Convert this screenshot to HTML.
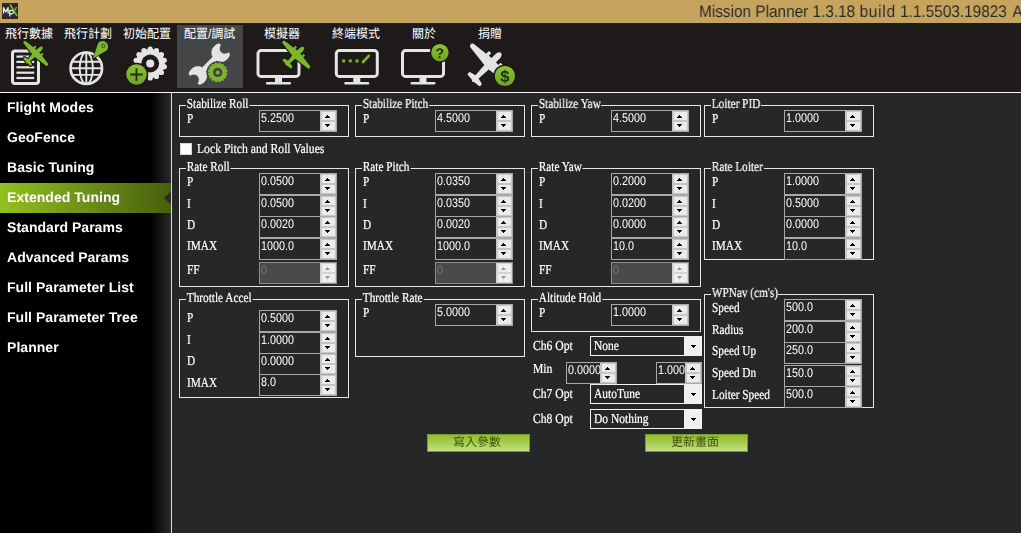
<!DOCTYPE html><html><head><meta charset="utf-8"><title>Mission Planner</title><style>
*{box-sizing:border-box;margin:0;padding:0}
html,body{width:1021px;height:533px;overflow:hidden;background:#262729}
body{position:relative;font-family:"Liberation Serif",serif;font-size:14px;color:#fff;text-rendering:geometricPrecision}
svg text{text-rendering:geometricPrecision}
.abs,.abs>*{position:absolute}
#title{left:0;top:0;width:1021px;height:23px;background:#c6a45d}
#title .t{will-change:transform;left:698.5px;top:2px;font:16.8px/20px "Liberation Sans",sans-serif;color:#2b2a27;white-space:nowrap;transform:scaleX(.915);transform-origin:0 0}
#tb{left:0;top:23px;width:1021px;height:69px;background:#1c1918;background-image:repeating-linear-gradient(0deg,rgba(255,255,255,.012) 0,rgba(255,255,255,.012) 1px,rgba(0,0,0,0) 1px,rgba(0,0,0,0) 2px)}
#hl{left:0;top:92px;width:1021px;height:1px;background:#f6f6f6}
#side{left:0;top:93px;width:171px;height:440px;background:linear-gradient(90deg,#000 0,#000 150px,#0b0b0b 156px,#2a2a2a 171px)}
#vl{left:171px;top:93px;width:1px;height:440px;background:#d8d8d8}
.mi{will-change:transform;left:0;width:171px;height:30px;font:bold 14px/28px "Liberation Sans",sans-serif;color:#fff;padding-left:7px;white-space:nowrap;letter-spacing:.04px}
.mi.sel{background:linear-gradient(90deg,#93c01f 0,#5d7c14 120px,#47600f 171px)}
.gb{border:1px solid #e6e6e6}
.gt,.lb,.cb .v{-webkit-text-stroke:.22px #fff}
.gt,.lb{white-space:nowrap;font:13.7px/16px "Liberation Serif",serif;text-rendering:geometricPrecision;height:16px;transform:scaleX(.823);transform-origin:0 0}
.gt{background:#262729;padding:0 1px}
.sp{border:1px solid #a8a9ab;background:#262729;height:22px;overflow:hidden}
.sp .v{left:.5px;top:0;font:12.6px/14px "Liberation Sans",sans-serif;color:#fff;transform:scaleX(.853);transform-origin:0 0;white-space:nowrap}
.sp .bt{right:0;top:0;width:16px;height:20px;background:#c6c6c6}
.sp .u,.sp .d{left:2px;width:13px;height:8px;background:#ebebeb}
.sp .u{top:1px}
.sp .d{top:11px}
.sp.dis{background:#48494b;border-color:#8e8e90}
.sp.dis .v{color:#77787a}
.sp.dis .bt{background:#d4d4d4}
.sp.dis .u,.sp.dis .d{background:#eee}
.au,.ad{width:1px;height:1px;background:currentColor;color:#000}
.au{box-shadow:-1px 1px,0 1px,1px 1px,-2px 2px,-1px 2px,0 2px,1px 2px,2px 2px}
.ad{box-shadow:-1px -1px,0 -1px,1px -1px,-2px -2px,-1px -2px,0 -2px,1px -2px,2px -2px}
.cb{border:1px solid #f2f2f2;background:#262729;height:20px}
.cb .v{left:3px;top:1px;font:13.7px/16px "Liberation Serif",serif;text-rendering:geometricPrecision;transform:scaleX(.84);transform-origin:0 0;white-space:nowrap}
.cb .bt{right:0;top:0;width:17px;height:18px;background:#f0f0f0}
.btn{height:18px;border:1px solid #79992a;background:linear-gradient(180deg,#92bf2b 0,#a5cb4c 45%,#c4df86 100%)}
</style></head><body class="abs">
<div id="title" class="abs"><svg style="left:2px;top:3px" width="16" height="16" viewBox="0 0 16 16"><rect width="16" height="16" fill="#2b2b2c"/><g fill="none" stroke="#f2f2f2" stroke-width="1.25" stroke-linejoin="round"><path d="M1.5 10.4V4.6L3.8 9L6.1 4.6V10.4"/><path d="M7.8 13.6V7.3H9.7a1.8 1.8 0 0 1 0 3.6H7.8"/></g><path d="M8.3 2L14.7 12.4" stroke="#7cb82f" stroke-width="1.7" fill="none" stroke-linecap="round"/><path d="M14.3 4.6L12.4 7.6" stroke="#7cb82f" stroke-width="1.2" fill="none" stroke-linecap="round"/></svg><div class="t">Mission Planner 1.3.18 <span style="letter-spacing:.85px">build</span> 1.1.5503.19823<span style="letter-spacing:1.4px"> </span>A</div></div>
<div id="tb" class="abs">
<div style="left:177px;top:2px;width:66px;height:63px;background:#444547"></div>
<svg style="left:5px;top:3px;overflow:visible" width="48" height="16" aria-label="飛行數據"><title>飛行數據</title><text x="0" y="0" font-size="12" fill="#fff" font-family="&quot;Liberation Sans&quot;, &quot;Noto Sans CJK TC&quot;, sans-serif" transform="translate(0,12.45) scale(1,1.06)">飛行數據</text></svg>
<svg style="left:63.5px;top:3px;overflow:visible" width="48" height="16" aria-label="飛行計劃"><title>飛行計劃</title><text x="0" y="0" font-size="12" fill="#fff" font-family="&quot;Liberation Sans&quot;, &quot;Noto Sans CJK TC&quot;, sans-serif" transform="translate(0,12.45) scale(1,1.06)">飛行計劃</text></svg>
<svg style="left:122.5px;top:3px;overflow:visible" width="48" height="16" aria-label="初始配置"><title>初始配置</title><text x="0" y="0" font-size="12" fill="#fff" font-family="&quot;Liberation Sans&quot;, &quot;Noto Sans CJK TC&quot;, sans-serif" transform="translate(0,12.45) scale(1,1.06)">初始配置</text></svg>
<svg style="left:183.5px;top:3px;overflow:visible" width="52" height="16" aria-label="配置/調試"><title>配置/調試</title><text x="0" y="0" font-size="12" fill="#fff" font-family="&quot;Liberation Sans&quot;, &quot;Noto Sans CJK TC&quot;, sans-serif" transform="translate(0,12.45) scale(1,1.06)">配置/調試</text></svg>
<svg style="left:263.5px;top:3px;overflow:visible" width="36" height="16" aria-label="模擬器"><title>模擬器</title><text x="0" y="0" font-size="12" fill="#fff" font-family="&quot;Liberation Sans&quot;, &quot;Noto Sans CJK TC&quot;, sans-serif" transform="translate(0,12.45) scale(1,1.06)">模擬器</text></svg>
<svg style="left:331.5px;top:3px;overflow:visible" width="48" height="16" aria-label="終端模式"><title>終端模式</title><text x="0" y="0" font-size="12" fill="#fff" font-family="&quot;Liberation Sans&quot;, &quot;Noto Sans CJK TC&quot;, sans-serif" transform="translate(0,12.45) scale(1,1.06)">終端模式</text></svg>
<svg style="left:411.5px;top:3px;overflow:visible" width="24" height="16" aria-label="關於"><title>關於</title><text x="0" y="0" font-size="12" fill="#fff" font-family="&quot;Liberation Sans&quot;, &quot;Noto Sans CJK TC&quot;, sans-serif" transform="translate(0,12.45) scale(1,1.06)">關於</text></svg>
<svg style="left:477.5px;top:3px;overflow:visible" width="24" height="16" aria-label="捐贈"><title>捐贈</title><text x="0" y="0" font-size="12" fill="#fff" font-family="&quot;Liberation Sans&quot;, &quot;Noto Sans CJK TC&quot;, sans-serif" transform="translate(0,12.45) scale(1,1.06)">捐贈</text></svg>
<svg style="left:0;top:-23px" width="1021" height="92" viewBox="0 0 1021 92">
<defs><linearGradient id="gg" x1="0" y1="0" x2="0" y2="1"><stop offset="0" stop-color="#8cc436"/><stop offset="1" stop-color="#6ea322"/></linearGradient></defs>
<rect x="12.5" y="51" width="26" height="32.5" rx="2.5" fill="none" stroke="#e4e4e4" stroke-width="3"/>
<rect x="16.4" y="55.5" width="17.8" height="2.2" fill="#e4e4e4"/>
<rect x="16.4" y="60.8" width="17.8" height="2.2" fill="#e4e4e4"/>
<rect x="16.4" y="66.2" width="17.8" height="2.2" fill="#e4e4e4"/>
<rect x="16.4" y="71.6" width="17.8" height="2.2" fill="#e4e4e4"/>
<rect x="16.4" y="76.9" width="17.8" height="2.2" fill="#e4e4e4"/>
<path d="M0 -10 C1.4 -10 2.1 -8 2.1 -6 L2.1 -3.2 L4.4 -2.95 L4.4 -5.2 L6.6 -5.2 L6.6 -2.7 L17 -1.4 C18.7 -1.2 18.7 1.6 17 1.8 L2.1 3.6 L1.5 10.399999999999999 L5 11.3 C6.3 11.600000000000001 6.3 13.7 5 13.8 L1 14.2 L0 15.100000000000001 L-1 14.2 L-5 13.8 C-6.3 13.7 -6.3 11.600000000000001 -5 11.3 L-1.5 10.399999999999999 L-2.1 3.6 L-17 1.8 C-18.7 1.6 -18.7 -1.2 -17 -1.4 L-6.6 -2.7 L-6.6 -5.2 L-4.4 -5.2 L-4.4 -2.95 L-2.1 -3.2 L-2.1 -6 C-2.1 -8 -1.4 -10 0 -10Z" fill="#7db52b" stroke="#1d1a19" stroke-width="2.38" paint-order="stroke" stroke-linejoin="round" transform="translate(35.9,53.3) rotate(45) scale(0.925)"/>
<g fill="none" stroke="#e4e4e4"><circle cx="86.3" cy="68.2" r="15.7" stroke-width="2.7"/><g stroke-width="1.9"><ellipse cx="86.3" cy="68.2" rx="6.6" ry="15.7"/><path d="M86.3 52.5V84M71 68.3H101.6M72.6 61.7H100M72.6 74.9H100"/></g></g>
<path d="M93 58.5 L98.2 43 A5.6 5.6 0 1 1 106.5 50.5Z" fill="#7db52b" stroke="#1d1a19" stroke-width="1.2" paint-order="stroke"/><circle cx="103.3" cy="46" r="1.7" fill="none" stroke="#3c5a12" stroke-width="1"/>
<circle cx="150.2" cy="63.5" r="14.6" fill="#e4e4e4"/><circle cx="164.24" cy="66.70" r="2.6" fill="#e4e4e4"/><circle cx="161.46" cy="72.48" r="2.6" fill="#e4e4e4"/><circle cx="156.45" cy="76.47" r="2.6" fill="#e4e4e4"/><circle cx="150.20" cy="77.90" r="2.6" fill="#e4e4e4"/><circle cx="143.95" cy="76.47" r="2.6" fill="#e4e4e4"/><circle cx="138.94" cy="72.48" r="2.6" fill="#e4e4e4"/><circle cx="136.16" cy="66.70" r="2.6" fill="#e4e4e4"/><circle cx="136.16" cy="60.30" r="2.6" fill="#e4e4e4"/><circle cx="138.94" cy="54.52" r="2.6" fill="#e4e4e4"/><circle cx="143.95" cy="50.53" r="2.6" fill="#e4e4e4"/><circle cx="150.20" cy="49.10" r="2.6" fill="#e4e4e4"/><circle cx="156.45" cy="50.53" r="2.6" fill="#e4e4e4"/><circle cx="161.46" cy="54.52" r="2.6" fill="#e4e4e4"/><circle cx="164.24" cy="60.30" r="2.6" fill="#e4e4e4"/>
<circle cx="150.2" cy="63.5" r="8.9" fill="#1d1a19"/><circle cx="150.2" cy="63.5" r="4" fill="#e4e4e4"/>
<circle cx="136.5" cy="74.5" r="11.8" fill="#1d1a19"/><circle cx="136.5" cy="74.5" r="10.2" fill="url(#gg)"/><path d="M136.5 68.2V80.8M130.2 74.5H142.8" stroke="#23300f" stroke-width="1.9"/>
<path d="M-7.27 -21.5 A9 9 0 0 0 -2.5 -7.55 L-2.5 7.55 A9 9 0 0 0 -7.27 21.5 L-5.48 21.5 A5.5 5.5 0 0 1 5.48 21.5 L7.27 21.5 A9 9 0 0 0 2.5 7.55 L2.5 -7.55 A9 9 0 0 0 7.27 -21.5 L5.48 -21.5 A5.5 5.5 0 0 1 -5.48 -21.5Z" fill="#e4e4e4" stroke="#e4e4e4" stroke-width=".7" stroke-linejoin="round" transform="translate(209.3,64.1) rotate(45)"/>
<circle cx="217.7" cy="72.4" r="11.2" fill="#444547"/>
<circle cx="217.7" cy="72.4" r="8.4" fill="#7db52b"/><circle cx="226.04" cy="74.06" r="1.5" fill="#7db52b"/><circle cx="224.77" cy="77.12" r="1.5" fill="#7db52b"/><circle cx="222.42" cy="79.47" r="1.5" fill="#7db52b"/><circle cx="219.36" cy="80.74" r="1.5" fill="#7db52b"/><circle cx="216.04" cy="80.74" r="1.5" fill="#7db52b"/><circle cx="212.98" cy="79.47" r="1.5" fill="#7db52b"/><circle cx="210.63" cy="77.12" r="1.5" fill="#7db52b"/><circle cx="209.36" cy="74.06" r="1.5" fill="#7db52b"/><circle cx="209.36" cy="70.74" r="1.5" fill="#7db52b"/><circle cx="210.63" cy="67.68" r="1.5" fill="#7db52b"/><circle cx="212.98" cy="65.33" r="1.5" fill="#7db52b"/><circle cx="216.04" cy="64.06" r="1.5" fill="#7db52b"/><circle cx="219.36" cy="64.06" r="1.5" fill="#7db52b"/><circle cx="222.42" cy="65.33" r="1.5" fill="#7db52b"/><circle cx="224.77" cy="67.68" r="1.5" fill="#7db52b"/><circle cx="226.04" cy="70.74" r="1.5" fill="#7db52b"/>
<circle cx="217.7" cy="72.4" r="4.7" fill="#444547"/><circle cx="217.7" cy="72.4" r="2" fill="#7db52b"/>
<rect x="258.0" y="50.6" width="41" height="25.8" rx="3" fill="none" stroke="#e4e4e4" stroke-width="3"/><rect x="275.0" y="77" width="7" height="6" fill="#e4e4e4"/><rect x="266.0" y="82" width="25" height="2.6" rx="1" fill="#e4e4e4"/>
<path d="M0 -10 C1.4 -10 2.1 -8 2.1 -6 L2.1 -3.2 L4.4 -2.95 L4.4 -5.2 L6.6 -5.2 L6.6 -2.7 L17 -1.4 C18.7 -1.2 18.7 1.6 17 1.8 L2.1 3.6 L1.5 10.0 L5 10.9 C6.3 11.200000000000001 6.3 13.3 5 13.4 L1 13.799999999999999 L0 14.700000000000001 L-1 13.799999999999999 L-5 13.4 C-6.3 13.3 -6.3 11.200000000000001 -5 10.9 L-1.5 10.0 L-2.1 3.6 L-17 1.8 C-18.7 1.6 -18.7 -1.2 -17 -1.4 L-6.6 -2.7 L-6.6 -5.2 L-4.4 -5.2 L-4.4 -2.95 L-2.1 -3.2 L-2.1 -6 C-2.1 -8 -1.4 -10 0 -10Z" fill="#7db52b" stroke="#1d1a19" stroke-width="2.12" paint-order="stroke" stroke-linejoin="round" transform="translate(296.4,54.5) rotate(45) scale(1.04)"/>
<rect x="336.3" y="50.6" width="41" height="25.8" rx="3" fill="none" stroke="#e4e4e4" stroke-width="3"/><rect x="353.3" y="77" width="7" height="6" fill="#e4e4e4"/><rect x="344.3" y="82" width="25" height="2.6" rx="1" fill="#e4e4e4"/>
<rect x="342.2" y="59.4" width="3" height="3" fill="#7db52b"/>
<rect x="348.8" y="59.4" width="3" height="3" fill="#7db52b"/>
<rect x="355.5" y="59.4" width="3" height="3" fill="#7db52b"/>
<path d="M363 62L368.8 55.8" stroke="#7db52b" stroke-width="2.6" stroke-linecap="round"/>
<rect x="402.5" y="50.6" width="41" height="25.8" rx="3" fill="none" stroke="#e4e4e4" stroke-width="3"/><rect x="419.5" y="77" width="7" height="6" fill="#e4e4e4"/><rect x="410.5" y="82" width="25" height="2.6" rx="1" fill="#e4e4e4"/>
<circle cx="439.9" cy="52.6" r="10.2" fill="#1d1a19"/><circle cx="439.9" cy="52.6" r="8.7" fill="url(#gg)"/><text x="439.9" y="57.6" text-anchor="middle" font-family="Liberation Sans" font-weight="bold" font-size="14" fill="#23300f">?</text>
<path d="M0 -10 C1.4 -10 2.1 -8 2.1 -6 L2.1 -3.2 L4.4 -2.95 L4.4 -5.2 L6.6 -5.2 L6.6 -2.7 L17 -1.4 C18.7 -1.2 18.7 1.6 17 1.8 L2.1 3.6 L1.5 12.6 L5 13.5 C6.3 13.8 6.3 15.9 5 16.0 L1 16.4 L0 17.3 L-1 16.4 L-5 16.0 C-6.3 15.9 -6.3 13.8 -5 13.5 L-1.5 12.6 L-2.1 3.6 L-17 1.8 C-18.7 1.6 -18.7 -1.2 -17 -1.4 L-6.6 -2.7 L-6.6 -5.2 L-4.4 -5.2 L-4.4 -2.95 L-2.1 -3.2 L-2.1 -6 C-2.1 -8 -1.4 -10 0 -10Z" fill="#e4e4e4" transform="translate(490.4,63.5) rotate(45) scale(1.5)"/>
<circle cx="504.9" cy="76" r="11.6" fill="#1d1a19"/><circle cx="504.9" cy="76" r="10.1" fill="url(#gg)"/><text x="504.9" y="81.5" text-anchor="middle" font-family="Liberation Sans" font-weight="bold" font-size="16.5" fill="#23300f">$</text>
</svg>
</div>
<div id="hl" class="abs"></div><div id="side" class="abs">
<div class="mi" style="top:0px">Flight Modes</div>
<div class="mi" style="top:30px">GeoFence</div>
<div class="mi" style="top:60px">Basic Tuning</div>
<div class="mi sel" style="top:90px">Extended Tuning</div>
<div class="mi" style="top:120px">Standard Params</div>
<div class="mi" style="top:150px">Advanced Params</div>
<div class="mi" style="top:180px">Full Parameter List</div>
<div class="mi" style="top:210px">Full Parameter Tree</div>
<div class="mi" style="top:240px">Planner</div>
<svg style="left:163px;top:98px" width="8" height="14" viewBox="0 0 8 14"><path d="M8 0.5L0.8 7L8 13.5Z" fill="#2b2b2b"/></svg>
</div><div id="vl" class="abs"></div>
<div id="main" class="abs" style="left:0;top:0;width:1021px;height:533px;will-change:transform">
<div class="gb" style="left:179px;top:105px;width:170px;height:32px"></div>
<div class="gt" style="left:185.5px;top:96px">Stabilize Roll</div>
<div class="lb" style="left:187px;top:111px">P</div>
<div class="sp abs" style="left:259px;top:110px;width:78px"><div class="v">5.2500</div><div class="bt abs"><div class="u"></div><div class="d"></div><div class="au" style="left:7px;top:4px;color:#000"></div><div class="ad" style="left:7px;top:15px;color:#000"></div></div></div>
<div class="gb" style="left:355px;top:105px;width:170px;height:32px"></div>
<div class="gt" style="left:361.5px;top:96px">Stabilize Pitch</div>
<div class="lb" style="left:363px;top:111px">P</div>
<div class="sp abs" style="left:435px;top:110px;width:78px"><div class="v">4.5000</div><div class="bt abs"><div class="u"></div><div class="d"></div><div class="au" style="left:7px;top:4px;color:#000"></div><div class="ad" style="left:7px;top:15px;color:#000"></div></div></div>
<div class="gb" style="left:531px;top:105px;width:170px;height:32px"></div>
<div class="gt" style="left:537.5px;top:96px">Stabilize Yaw</div>
<div class="lb" style="left:539px;top:111px">P</div>
<div class="sp abs" style="left:611px;top:110px;width:78px"><div class="v">4.5000</div><div class="bt abs"><div class="u"></div><div class="d"></div><div class="au" style="left:7px;top:4px;color:#000"></div><div class="ad" style="left:7px;top:15px;color:#000"></div></div></div>
<div class="gb" style="left:704px;top:105px;width:170px;height:32px"></div>
<div class="gt" style="left:710.5px;top:96px">Loiter PID</div>
<div class="lb" style="left:712px;top:111px">P</div>
<div class="sp abs" style="left:784px;top:110px;width:78px"><div class="v">1.0000</div><div class="bt abs"><div class="u"></div><div class="d"></div><div class="au" style="left:7px;top:4px;color:#000"></div><div class="ad" style="left:7px;top:15px;color:#000"></div></div></div>
<div style="left:180px;top:143px;width:12px;height:12px;background:#fff;border:1px solid #d5d5d5"></div>
<div class="lb" style="left:196.5px;top:141px;transform:scaleX(0.852)">Lock Pitch and Roll Values</div>
<div class="gb" style="left:179px;top:168px;width:170px;height:119px"></div>
<div class="gt" style="left:185.5px;top:159px">Rate Roll</div>
<div class="lb" style="left:187px;top:174px">P</div>
<div class="sp abs" style="left:259px;top:173px;width:78px"><div class="v">0.0500</div><div class="bt abs"><div class="u"></div><div class="d"></div><div class="au" style="left:7px;top:4px;color:#000"></div><div class="ad" style="left:7px;top:15px;color:#000"></div></div></div>
<div class="lb" style="left:187px;top:196px">I</div>
<div class="sp abs" style="left:259px;top:195px;width:78px"><div class="v">0.0500</div><div class="bt abs"><div class="u"></div><div class="d"></div><div class="au" style="left:7px;top:4px;color:#000"></div><div class="ad" style="left:7px;top:15px;color:#000"></div></div></div>
<div class="lb" style="left:187px;top:217px">D</div>
<div class="sp abs" style="left:259px;top:216px;width:78px"><div class="v">0.0020</div><div class="bt abs"><div class="u"></div><div class="d"></div><div class="au" style="left:7px;top:4px;color:#000"></div><div class="ad" style="left:7px;top:15px;color:#000"></div></div></div>
<div class="lb" style="left:187px;top:238px">IMAX</div>
<div class="sp abs" style="left:259px;top:238px;width:78px"><div class="v">1000.0</div><div class="bt abs"><div class="u"></div><div class="d"></div><div class="au" style="left:7px;top:4px;color:#000"></div><div class="ad" style="left:7px;top:15px;color:#000"></div></div></div>
<div class="lb" style="left:187px;top:262px">FF</div>
<div class="sp abs dis" style="left:259px;top:262px;width:78px"><div class="v">0</div><div class="bt abs"><div class="u"></div><div class="d"></div><div class="au" style="left:7px;top:4px;color:#a0a0a0"></div><div class="ad" style="left:7px;top:15px;color:#a0a0a0"></div></div></div>
<div class="gb" style="left:355px;top:168px;width:170px;height:119px"></div>
<div class="gt" style="left:361.5px;top:159px">Rate Pitch</div>
<div class="lb" style="left:363px;top:174px">P</div>
<div class="sp abs" style="left:435px;top:173px;width:78px"><div class="v">0.0350</div><div class="bt abs"><div class="u"></div><div class="d"></div><div class="au" style="left:7px;top:4px;color:#000"></div><div class="ad" style="left:7px;top:15px;color:#000"></div></div></div>
<div class="lb" style="left:363px;top:196px">I</div>
<div class="sp abs" style="left:435px;top:195px;width:78px"><div class="v">0.0350</div><div class="bt abs"><div class="u"></div><div class="d"></div><div class="au" style="left:7px;top:4px;color:#000"></div><div class="ad" style="left:7px;top:15px;color:#000"></div></div></div>
<div class="lb" style="left:363px;top:217px">D</div>
<div class="sp abs" style="left:435px;top:216px;width:78px"><div class="v">0.0020</div><div class="bt abs"><div class="u"></div><div class="d"></div><div class="au" style="left:7px;top:4px;color:#000"></div><div class="ad" style="left:7px;top:15px;color:#000"></div></div></div>
<div class="lb" style="left:363px;top:238px">IMAX</div>
<div class="sp abs" style="left:435px;top:238px;width:78px"><div class="v">1000.0</div><div class="bt abs"><div class="u"></div><div class="d"></div><div class="au" style="left:7px;top:4px;color:#000"></div><div class="ad" style="left:7px;top:15px;color:#000"></div></div></div>
<div class="lb" style="left:363px;top:262px">FF</div>
<div class="sp abs dis" style="left:435px;top:262px;width:78px"><div class="v">0</div><div class="bt abs"><div class="u"></div><div class="d"></div><div class="au" style="left:7px;top:4px;color:#a0a0a0"></div><div class="ad" style="left:7px;top:15px;color:#a0a0a0"></div></div></div>
<div class="gb" style="left:531px;top:168px;width:170px;height:119px"></div>
<div class="gt" style="left:537.5px;top:159px">Rate Yaw</div>
<div class="lb" style="left:539px;top:174px">P</div>
<div class="sp abs" style="left:611px;top:173px;width:78px"><div class="v">0.2000</div><div class="bt abs"><div class="u"></div><div class="d"></div><div class="au" style="left:7px;top:4px;color:#000"></div><div class="ad" style="left:7px;top:15px;color:#000"></div></div></div>
<div class="lb" style="left:539px;top:196px">I</div>
<div class="sp abs" style="left:611px;top:195px;width:78px"><div class="v">0.0200</div><div class="bt abs"><div class="u"></div><div class="d"></div><div class="au" style="left:7px;top:4px;color:#000"></div><div class="ad" style="left:7px;top:15px;color:#000"></div></div></div>
<div class="lb" style="left:539px;top:217px">D</div>
<div class="sp abs" style="left:611px;top:216px;width:78px"><div class="v">0.0000</div><div class="bt abs"><div class="u"></div><div class="d"></div><div class="au" style="left:7px;top:4px;color:#000"></div><div class="ad" style="left:7px;top:15px;color:#000"></div></div></div>
<div class="lb" style="left:539px;top:238px">IMAX</div>
<div class="sp abs" style="left:611px;top:238px;width:78px"><div class="v">10.0</div><div class="bt abs"><div class="u"></div><div class="d"></div><div class="au" style="left:7px;top:4px;color:#000"></div><div class="ad" style="left:7px;top:15px;color:#000"></div></div></div>
<div class="lb" style="left:539px;top:262px">FF</div>
<div class="sp abs dis" style="left:611px;top:262px;width:78px"><div class="v">0</div><div class="bt abs"><div class="u"></div><div class="d"></div><div class="au" style="left:7px;top:4px;color:#a0a0a0"></div><div class="ad" style="left:7px;top:15px;color:#a0a0a0"></div></div></div>
<div class="gb" style="left:704px;top:168px;width:170px;height:92px"></div>
<div class="gt" style="left:710.5px;top:159px">Rate Loiter</div>
<div class="lb" style="left:712px;top:174px">P</div>
<div class="sp abs" style="left:784px;top:173px;width:78px"><div class="v">1.0000</div><div class="bt abs"><div class="u"></div><div class="d"></div><div class="au" style="left:7px;top:4px;color:#000"></div><div class="ad" style="left:7px;top:15px;color:#000"></div></div></div>
<div class="lb" style="left:712px;top:196px">I</div>
<div class="sp abs" style="left:784px;top:195px;width:78px"><div class="v">0.5000</div><div class="bt abs"><div class="u"></div><div class="d"></div><div class="au" style="left:7px;top:4px;color:#000"></div><div class="ad" style="left:7px;top:15px;color:#000"></div></div></div>
<div class="lb" style="left:712px;top:217px">D</div>
<div class="sp abs" style="left:784px;top:216px;width:78px"><div class="v">0.0000</div><div class="bt abs"><div class="u"></div><div class="d"></div><div class="au" style="left:7px;top:4px;color:#000"></div><div class="ad" style="left:7px;top:15px;color:#000"></div></div></div>
<div class="lb" style="left:712px;top:238px">IMAX</div>
<div class="sp abs" style="left:784px;top:238px;width:78px"><div class="v">10.0</div><div class="bt abs"><div class="u"></div><div class="d"></div><div class="au" style="left:7px;top:4px;color:#000"></div><div class="ad" style="left:7px;top:15px;color:#000"></div></div></div>
<div class="gb" style="left:179px;top:299px;width:170px;height:99px"></div>
<div class="gt" style="left:185.5px;top:290px">Throttle Accel</div>
<div class="lb" style="left:187px;top:310px">P</div>
<div class="sp abs" style="left:259px;top:310px;width:78px"><div class="v">0.5000</div><div class="bt abs"><div class="u"></div><div class="d"></div><div class="au" style="left:7px;top:4px;color:#000"></div><div class="ad" style="left:7px;top:15px;color:#000"></div></div></div>
<div class="lb" style="left:187px;top:332px">I</div>
<div class="sp abs" style="left:259px;top:332px;width:78px"><div class="v">1.0000</div><div class="bt abs"><div class="u"></div><div class="d"></div><div class="au" style="left:7px;top:4px;color:#000"></div><div class="ad" style="left:7px;top:15px;color:#000"></div></div></div>
<div class="lb" style="left:187px;top:353px">D</div>
<div class="sp abs" style="left:259px;top:353px;width:78px"><div class="v">0.0000</div><div class="bt abs"><div class="u"></div><div class="d"></div><div class="au" style="left:7px;top:4px;color:#000"></div><div class="ad" style="left:7px;top:15px;color:#000"></div></div></div>
<div class="lb" style="left:187px;top:375px">IMAX</div>
<div class="sp abs" style="left:259px;top:374px;width:78px"><div class="v">8.0</div><div class="bt abs"><div class="u"></div><div class="d"></div><div class="au" style="left:7px;top:4px;color:#000"></div><div class="ad" style="left:7px;top:15px;color:#000"></div></div></div>
<div class="gb" style="left:355px;top:299px;width:170px;height:58px"></div>
<div class="gt" style="left:361.5px;top:290px">Throttle Rate</div>
<div class="lb" style="left:363px;top:305px">P</div>
<div class="sp abs" style="left:435px;top:304px;width:78px"><div class="v">5.0000</div><div class="bt abs"><div class="u"></div><div class="d"></div><div class="au" style="left:7px;top:4px;color:#000"></div><div class="ad" style="left:7px;top:15px;color:#000"></div></div></div>
<div class="gb" style="left:531px;top:299px;width:170px;height:33px"></div>
<div class="gt" style="left:537.5px;top:290px">Altitude Hold</div>
<div class="lb" style="left:539px;top:305px">P</div>
<div class="sp abs" style="left:611px;top:304px;width:78px"><div class="v">1.0000</div><div class="bt abs"><div class="u"></div><div class="d"></div><div class="au" style="left:7px;top:4px;color:#000"></div><div class="ad" style="left:7px;top:15px;color:#000"></div></div></div>
<div class="gb" style="left:704px;top:294px;width:170px;height:114px"></div>
<div class="gt" style="left:710.5px;top:285px">WPNav (cm's)</div>
<div class="lb" style="left:712px;top:300px">Speed</div>
<div class="sp abs" style="left:784px;top:299px;width:78px"><div class="v">500.0</div><div class="bt abs"><div class="u"></div><div class="d"></div><div class="au" style="left:7px;top:4px;color:#000"></div><div class="ad" style="left:7px;top:15px;color:#000"></div></div></div>
<div class="lb" style="left:712px;top:321.5px">Radius</div>
<div class="sp abs" style="left:784px;top:321px;width:78px"><div class="v">200.0</div><div class="bt abs"><div class="u"></div><div class="d"></div><div class="au" style="left:7px;top:4px;color:#000"></div><div class="ad" style="left:7px;top:15px;color:#000"></div></div></div>
<div class="lb" style="left:712px;top:342.5px">Speed Up</div>
<div class="sp abs" style="left:784px;top:342px;width:78px"><div class="v">250.0</div><div class="bt abs"><div class="u"></div><div class="d"></div><div class="au" style="left:7px;top:4px;color:#000"></div><div class="ad" style="left:7px;top:15px;color:#000"></div></div></div>
<div class="lb" style="left:712px;top:364.5px">Speed Dn</div>
<div class="sp abs" style="left:784px;top:365px;width:78px"><div class="v">150.0</div><div class="bt abs"><div class="u"></div><div class="d"></div><div class="au" style="left:7px;top:4px;color:#000"></div><div class="ad" style="left:7px;top:15px;color:#000"></div></div></div>
<div class="lb" style="left:712px;top:386.5px">Loiter Speed</div>
<div class="sp abs" style="left:784px;top:386px;width:78px"><div class="v">500.0</div><div class="bt abs"><div class="u"></div><div class="d"></div><div class="au" style="left:7px;top:4px;color:#000"></div><div class="ad" style="left:7px;top:15px;color:#000"></div></div></div>
<div class="lb" style="left:533px;top:338px;transform:scaleX(0.852)">Ch6 Opt</div>
<div class="cb abs" style="left:590px;top:336px;width:112px"><div class="v">None</div><div class="bt abs"><div class="ad" style="left:9px;top:10px"></div></div></div>
<div class="lb" style="left:533px;top:361px;transform:scaleX(0.852)">Min</div>
<div class="sp abs" style="left:566px;top:362px;width:51px"><div class="v">0.0000</div><div class="bt abs"><div class="u"></div><div class="d"></div><div class="au" style="left:7px;top:4px;color:#000"></div><div class="ad" style="left:7px;top:15px;color:#000"></div></div></div>
<div class="sp abs" style="left:656px;top:362px;width:46px"><div class="v">1.000</div><div class="bt abs"><div class="u"></div><div class="d"></div><div class="au" style="left:7px;top:4px;color:#000"></div><div class="ad" style="left:7px;top:15px;color:#000"></div></div></div>
<div class="lb" style="left:533px;top:386px;transform:scaleX(0.852)">Ch7 Opt</div>
<div class="cb abs" style="left:590px;top:384px;width:112px"><div class="v">AutoTune</div><div class="bt abs"><div class="ad" style="left:9px;top:10px"></div></div></div>
<div class="lb" style="left:533px;top:411px;transform:scaleX(0.852)">Ch8 Opt</div>
<div class="cb abs" style="left:590px;top:409px;width:112px"><div class="v">Do Nothing</div><div class="bt abs"><div class="ad" style="left:9px;top:10px"></div></div></div>
<div class="btn abs" style="left:427px;top:434px;width:103px"><svg style="left:25.0px;top:0;overflow:visible" width="48" height="15" aria-label="寫入參數"><title>寫入參數</title><text x="0" y="0" font-size="12" fill="#3f5310" font-family="&quot;Liberation Sans&quot;, &quot;Noto Sans CJK TC&quot;, sans-serif" transform="translate(0,10.6)">寫入參數</text></svg></div>
<div class="btn abs" style="left:645px;top:434px;width:103px"><svg style="left:25.0px;top:0;overflow:visible" width="48" height="15" aria-label="更新畫面"><title>更新畫面</title><text x="0" y="0" font-size="12" fill="#3f5310" font-family="&quot;Liberation Sans&quot;, &quot;Noto Sans CJK TC&quot;, sans-serif" transform="translate(0,10.6)">更新畫面</text></svg></div>
</div>
</body></html>
